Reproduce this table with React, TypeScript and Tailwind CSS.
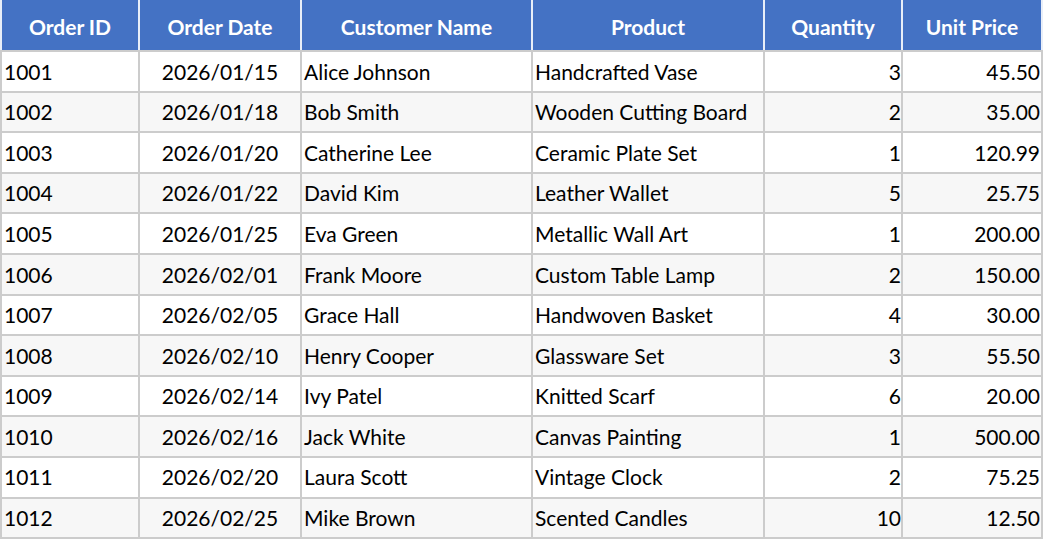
import React from "react";

const rows: [string, string, string, string, string, string][] = [
  ["1001", "2026/01/15", "Alice Johnson", "Handcrafted Vase", "3", "45.50"],
  ["1002", "2026/01/18", "Bob Smith", "Wooden Cutting Board", "2", "35.00"],
  ["1003", "2026/01/20", "Catherine Lee", "Ceramic Plate Set", "1", "120.99"],
  ["1004", "2026/01/22", "David Kim", "Leather Wallet", "5", "25.75"],
  ["1005", "2026/01/25", "Eva Green", "Metallic Wall Art", "1", "200.00"],
  ["1006", "2026/02/01", "Frank Moore", "Custom Table Lamp", "2", "150.00"],
  ["1007", "2026/02/05", "Grace Hall", "Handwoven Basket", "4", "30.00"],
  ["1008", "2026/02/10", "Henry Cooper", "Glassware Set", "3", "55.50"],
  ["1009", "2026/02/14", "Ivy Patel", "Knitted Scarf", "6", "20.00"],
  ["1010", "2026/02/16", "Jack White", "Canvas Painting", "1", "500.00"],
  ["1011", "2026/02/20", "Laura Scott", "Vintage Clock", "2", "75.25"],
  ["1012", "2026/02/25", "Mike Brown", "Scented Candles", "10", "12.50"],
];

const headers = ["Order ID", "Order Date", "Customer Name", "Product", "Quantity", "Unit Price"];

export default function App() {
  return (
    <div className="w-[1043px] h-[540px] bg-white overflow-hidden" style={{ fontFamily: "Lato, 'Noto Sans', sans-serif" }}>
      <table className="table-fixed border-collapse w-[1041px] text-[21px] text-black">
        <colgroup>
          <col className="w-[138px]" />
          <col className="w-[162px]" />
          <col className="w-[231px]" />
          <col className="w-[232px]" />
          <col className="w-[138px]" />
          <col className="w-[140px]" />
        </colgroup>
        <thead>
          <tr className="h-[51px]">
            {headers.map((h) => (
              <th
                key={h}
                className="bg-[#4472c4] text-white font-bold text-center border-x-2 border-x-[#e8eef8] border-b-2 border-b-[#cccccc] border-t-0 p-0 pt-[2px] leading-none"
              >
                {h}
              </th>
            ))}
          </tr>
        </thead>
        <tbody>
          {rows.map((r, i) => (
            <tr key={r[0]} className={`h-[40.6px] ${i % 2 === 1 ? "bg-[#f7f7f7]" : "bg-white"}`}>
              <td className="border-2 border-[#cccccc] pl-[2px] pr-[1px] py-0 text-left">{r[0]}</td>
              <td className="border-2 border-[#cccccc] px-[1px] py-0 text-center">{r[1]}</td>
              <td className="border-2 border-[#cccccc] pl-[2px] pr-[1px] py-0 text-left">{r[2]}</td>
              <td className="border-2 border-[#cccccc] pl-[2px] pr-[1px] py-0 text-left">{r[3]}</td>
              <td className="border-2 border-[#cccccc] pl-[1px] pr-0 py-0 text-right">{r[4]}</td>
              <td className="border-2 border-[#cccccc] pl-[1px] pr-[1px] py-0 text-right">{r[5]}</td>
            </tr>
          ))}
        </tbody>
      </table>
    </div>
  );
}
